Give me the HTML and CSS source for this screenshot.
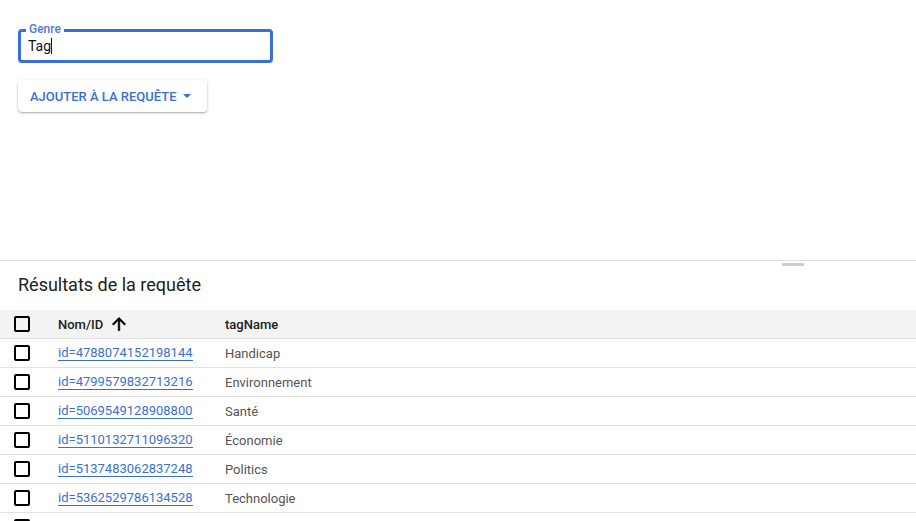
FILE: index.html
```html
<!DOCTYPE html>
<html lang="fr">
<head>
<meta charset="utf-8">
<link rel="stylesheet" href="styles.css">
</head>
<body>
<div class="top">
  <div class="field">
    <span class="field-label">Genre</span>
    <span class="field-value">Tag</span><span class="caret"></span>
  </div>
  <button class="add-btn">AJOUTER À LA REQUÊTE <span class="tri"></span></button>
</div>
<div class="results">
  <div class="handle"></div>
  <h2 class="title">Résultats de la requête</h2>
  <div class="table">
    <div class="row head">
      <div class="c-check"><span class="box"></span></div>
      <div class="c-id">Nom/ID <svg class="arrow" width="20" height="20" viewBox="0 0 24 24"><path d="M4 12l1.41 1.41L11 7.83V20h2V7.83l5.58 5.59L20 12l-8-8-8 8z" fill="#000" stroke="#000" stroke-width="0.6"/></svg></div>
      <div class="c-name">tagName</div>
    </div>
    <div class="row"><div class="c-check"><span class="box"></span></div><div class="c-id"><a href="#">id=4788074152198144</a></div><div class="c-name">Handicap</div></div>
    <div class="row"><div class="c-check"><span class="box"></span></div><div class="c-id"><a href="#">id=4799579832713216</a></div><div class="c-name">Environnement</div></div>
    <div class="row"><div class="c-check"><span class="box"></span></div><div class="c-id"><a href="#">id=5069549128908800</a></div><div class="c-name">Santé</div></div>
    <div class="row"><div class="c-check"><span class="box"></span></div><div class="c-id"><a href="#">id=5110132711096320</a></div><div class="c-name">Économie</div></div>
    <div class="row"><div class="c-check"><span class="box"></span></div><div class="c-id"><a href="#">id=5137483062837248</a></div><div class="c-name">Politics</div></div>
    <div class="row"><div class="c-check"><span class="box"></span></div><div class="c-id"><a href="#">id=5362529786134528</a></div><div class="c-name">Technologie</div></div>
    <div class="row"><div class="c-check"><span class="box"></span></div><div class="c-id"></div><div class="c-name"></div></div>
  </div>
</div>
</body>
</html>
```
FILE: styles.css
```css
html, body { margin: 0; padding: 0; background: #fff; overflow: hidden; }
body { font-family: Roboto, "Liberation Sans", sans-serif; width: 916px; height: 521px; }

.top { height: 260px; box-sizing: border-box; padding: 29px 18px 0; display: flex; flex-direction: column; align-items: flex-start; }

.field { position: relative; width: 255px; height: 34px; box-sizing: border-box; border: 3px solid #3a6fdb; border-radius: 4px; display: flex; align-items: center; padding-left: 7px; }
.field-label { position: absolute; top: -10px; left: 5px; padding: 0 3px; background: #fff; font-size: 12px; font-weight: 500; color: #4a7be0; line-height: 14px; }
.field-value { font-size: 14px; color: #111; }
.caret { display: inline-block; width: 1px; height: 16px; background: #111; }

.add-btn { margin-top: 17px; height: 32px; padding: 0 16px 0 12px; border: none; background: #fff; border-radius: 4px; box-shadow: 0 1px 3px rgba(0,0,0,0.25), 0 1px 1px rgba(0,0,0,0.12); font-family: Roboto, "Liberation Sans", sans-serif; font-size: 13px; font-weight: 500; color: #3a6fd8; letter-spacing: 0; display: flex; align-items: center; }
.tri { width: 0; height: 0; border-left: 4px solid transparent; border-right: 4px solid transparent; border-top: 4px solid #3a6fd8; margin-left: 6px; }

.results { position: relative; border-top: 1px solid #e0e0e0; }
.handle { position: absolute; top: 2px; left: 782px; width: 22px; height: 3px; background: #cccccc; border-radius: 1px; }
.title { margin: 0; padding: 12px 18px 13px; font-size: 18px; font-weight: 400; color: #212121; line-height: 24px; }

.row { display: flex; align-items: center; height: 28px; border-bottom: 1px solid #e0e0e0; font-size: 13px; color: #555; }
.row.head { background: #f3f3f3; color: #212121; font-weight: 500; }
.c-check { width: 58px; box-sizing: border-box; padding-left: 14px; display: flex; align-items: center; }
.box { display: block; width: 16px; height: 16px; box-sizing: border-box; border: 2px solid #000; border-radius: 2px; }
.c-id { width: 167px; display: flex; align-items: center; }
.arrow { margin-left: 6px; }
.c-id a { color: #3a6fd8; text-decoration: none; border-bottom: 1px solid #3a6fd8; line-height: 15px; }
.c-name { flex: 1; }
```
